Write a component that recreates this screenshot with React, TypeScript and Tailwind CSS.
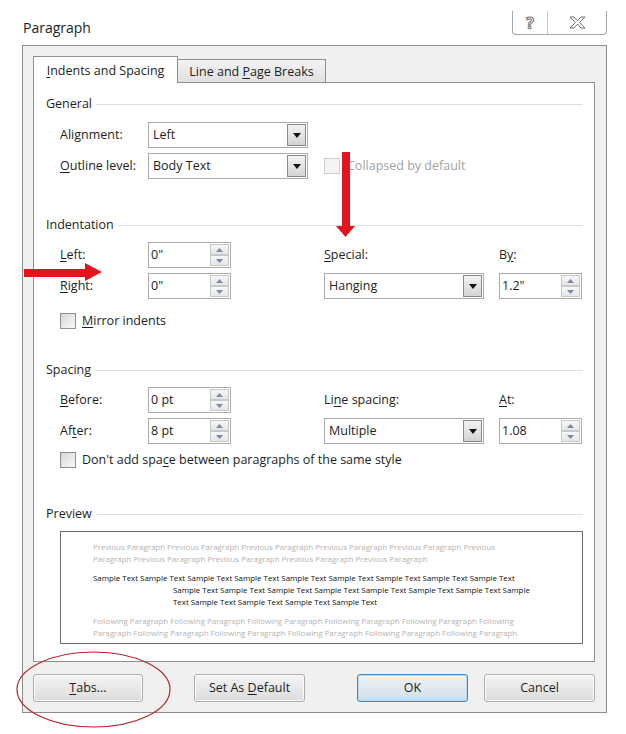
import React from "react";

const font = "font-['Open_Sans','Noto_Sans',sans-serif]";

const U: React.FC<{ children: React.ReactNode }> = ({ children }) => (
  <span className="underline decoration-1 underline-offset-2">{children}</span>
);

const SectionHeader: React.FC<{ title: string }> = ({ title }) => (
  <div className="flex h-4 items-center gap-[4px]">
    <span className="text-[12.5px] leading-4 text-[#1e1e1e]">{title}</span>
    <div className="h-px flex-1 bg-[#dfdfdf]" />
  </div>
);

const DropButton: React.FC = () => (
  <div className="m-px flex w-[19px] items-center justify-center border border-[#8a8a8a] bg-gradient-to-b from-[#f2f2f2] to-[#d4d4d4]">
    <svg width="8" height="5" viewBox="0 0 8 5">
      <path d="M0 0h8L4 5z" fill="#111" />
    </svg>
  </div>
);

const Select: React.FC<{ value: string }> = ({ value }) => (
  <div className="flex h-[26px] w-[160px] border border-[#abadb3] bg-white">
    <span className="flex flex-1 items-center pl-[4px] text-[12.5px] text-[#1e1e1e]">
      {value}
    </span>
    <DropButton />
  </div>
);

const SpinArrow: React.FC<{ up?: boolean }> = ({ up }) => (
  <div className="flex flex-1 items-center justify-center border border-[#c9c9c9] bg-gradient-to-b from-[#f7f7f7] to-[#e6e6e6]">
    <svg width="7" height="4" viewBox="0 0 7 4">
      <path d={up ? "M0 4h7L3.5 0z" : "M0 0h7L3.5 4z"} fill="#7a8aa6" />
    </svg>
  </div>
);

const Spin: React.FC<{ value: string }> = ({ value }) => (
  <div className="flex h-[26px] w-[83px] border border-[#abadb3] bg-white">
    <span className="flex flex-1 items-center pl-[2px] text-[12.5px] text-[#1e1e1e]">
      {value}
    </span>
    <div className="my-px mr-px flex w-[19px] flex-col">
      <SpinArrow up />
      <SpinArrow />
    </div>
  </div>
);

const Checkbox: React.FC<{ disabled?: boolean }> = ({ disabled }) =>
  disabled ? (
    <div className="h-[16px] w-[16px] border border-[#cfcfcf] bg-[#f4f4f4]" />
  ) : (
    <div className="h-[16px] w-[16px] border border-[#8e8f8f] bg-gradient-to-br from-[#d6d6d6] to-[#fafafa]" />
  );

const Label: React.FC<{ children: React.ReactNode }> = ({ children }) => (
  <span className="text-[12.5px] text-[#1e1e1e]">{children}</span>
);

const Button: React.FC<{ children: React.ReactNode; primary?: boolean }> = ({
  children,
  primary,
}) => (
  <div
    className={
      primary
        ? "flex h-[28px] w-[111px] items-center justify-center rounded-[3px] border border-[#3c8ccc] bg-gradient-to-b from-[#eef4f8] to-[#d2dde6] text-[12.5px] text-[#1e1e1e] shadow-[inset_0_0_0_1px_#b8d8ef]"
        : "flex h-[28px] w-[111px] items-center justify-center rounded-[3px] border border-[#acacac] bg-gradient-to-b from-[#f4f4f4] to-[#dcdcdc] text-[12.5px] text-[#1e1e1e] shadow-[inset_0_0_0_1px_#fbfbfb]"
    }
  >
    <span>{children}</span>
  </div>
);

const previewLines = {
  previous: [
    "Previous Paragraph Previous Paragraph Previous Paragraph Previous Paragraph Previous Paragraph Previous",
    "Paragraph Previous Paragraph Previous Paragraph Previous Paragraph Previous Paragraph",
  ],
  sample: [
    "Sample Text Sample Text Sample Text Sample Text Sample Text Sample Text Sample Text Sample Text Sample Text",
    "Sample Text Sample Text Sample Text Sample Text Sample Text Sample Text Sample Text Sample",
    "Text Sample Text Sample Text Sample Text Sample Text",
  ],
  following: [
    "Following Paragraph Following Paragraph Following Paragraph Following Paragraph Following Paragraph Following",
    "Paragraph Following Paragraph Following Paragraph Following Paragraph Following Paragraph Following Paragraph",
    "Following Paragraph Following Paragraph Following Paragraph Following Paragraph Following Paragraph",
  ],
};

const Preview: React.FC = () => (
  <div className="h-[113px] w-[523px] overflow-hidden border border-[#6d6d6d] bg-white pl-[32px] pt-[9px] text-[7.9px] leading-[12px]">
    {previewLines.previous.map((l) => (
      <div key={l} className="whitespace-nowrap text-[#b4b4b4]">
        {l}
      </div>
    ))}
    <div className="mt-[7px]">
      {previewLines.sample.map((l, i) => (
        <div
          key={l}
          className={`whitespace-nowrap text-[#111] ${i > 0 ? "pl-[80px]" : ""}`}
        >
          {l}
        </div>
      ))}
    </div>
    <div className="mt-[7px]">
      {previewLines.following.map((l) => (
        <div key={l} className="whitespace-nowrap text-[#b4b4b4]">
          {l}
        </div>
      ))}
    </div>
  </div>
);

const Row: React.FC<{ children: React.ReactNode; className?: string }> = ({
  children,
  className,
}) => (
  <div
    className={`grid h-[26px] grid-cols-[88px_176px_175px_84px] items-center pl-[14px] ${className ?? ""}`}
  >
    {children}
  </div>
);

const Annotations: React.FC = () => (
  <svg
    className="pointer-events-none absolute left-0 top-0"
    width="626"
    height="734"
    viewBox="0 0 626 734"
  >
    {/* down arrow */}
    <rect x="342" y="152" width="8" height="75" fill="#e3141c" />
    <path d="M336 226h19l-9.5 11z" fill="#e3141c" />
    {/* right arrow */}
    <rect x="24" y="269" width="62" height="8" fill="#e3141c" />
    <path d="M85 263v18l17-9z" fill="#e3141c" />
    {/* ellipse around Tabs */}
    <ellipse
      cx="93.5"
      cy="689.5"
      rx="76.5"
      ry="37.5"
      fill="none"
      stroke="#b8232a"
      strokeWidth="1.2"
    />
  </svg>
);

export default function App() {
  return (
    <div className={`relative h-[734px] w-[626px] overflow-hidden bg-white ${font}`}>
      {/* title bar */}
      <div className="flex h-[45px] items-start">
        <span className="ml-[23px] mt-[19px] text-[14px] leading-[18px] text-[#1e1e1e]">
          Paragraph
        </span>
        <div className="ml-auto mr-[19px] mt-[11px] flex h-[24px] w-[95px] rounded-b-[4px] border border-t-0 border-[#a7a7a7] bg-white">
          <div className="flex w-[35px] items-center justify-center border-r border-[#c8c8c8] text-[16px] font-bold text-transparent [-webkit-text-stroke:1px_#6e6e6e]">
            ?
          </div>
          <div className="flex flex-1 items-center justify-center">
            <svg width="17" height="13" viewBox="0 0 17 13">
              <path
                d="M1 1h4l3.5 3.8L12 1h4l-5.4 5.5L16 12h-4l-3.5-3.8L5 12H1l5.4-5.5z"
                fill="#fff"
                stroke="#6e6e6e"
                strokeWidth="1"
              />
            </svg>
          </div>
        </div>
      </div>

      {/* dialog frame */}
      <div className="ml-[22px] w-[585px] border border-[#8d8d8d] bg-[#f0f0f0] pb-[10px] pl-[10px] pr-[11px] pt-[10px]">
        {/* tabs */}
        <div className="flex h-[26px] items-end">
          <div className="relative z-10 -mb-px flex h-[27px] w-[145px] items-center justify-center border border-b-0 border-[#8e8f8f] bg-white pt-[3px] text-[12.5px] text-[#1e1e1e]">
            <span>
              <U>I</U>ndents and Spacing
            </span>
          </div>
          <div className="flex h-[23px] w-[148px] items-center justify-center border border-b-0 border-l-0 border-[#8e8f8f] bg-gradient-to-b from-[#f3f3f3] to-[#e0e0e0] pt-[2px] text-[12.5px] text-[#1e1e1e]">
            <span>
              Line and <U>P</U>age Breaks
            </span>
          </div>
        </div>

        {/* panel */}
        <div className="h-[580px] w-[562px] border border-[#8e8f8f] bg-white pl-[12px] pr-[11px] pt-[13px]">
          <SectionHeader title="General" />
          <Row className="mt-[10px]">
            <Label>
              Ali<U>g</U>nment:
            </Label>
            <div className="col-span-2">
              <Select value="Left" />
            </div>
          </Row>
          <Row className="mt-[5px]">
            <Label>
              <U>O</U>utline level:
            </Label>
            <Select value="Body Text" />
            <div className="col-span-2 flex items-center gap-[7px]">
              <Checkbox disabled />
              <span className="text-[12.5px] text-[#a2a2a2]">Collapsed by default</span>
            </div>
          </Row>

          <div className="mt-[38px]">
            <SectionHeader title="Indentation" />
          </div>
          <Row className="mt-[9px]">
            <Label>
              <U>L</U>eft:
            </Label>
            <Spin value={'0"'} />
            <Label>
              <U>S</U>pecial:
            </Label>
            <Label>
              B<U>y</U>:
            </Label>
          </Row>
          <Row className="mt-[5px]">
            <Label>
              <U>R</U>ight:
            </Label>
            <Spin value={'0"'} />
            <Select value="Hanging" />
            <Spin value={'1.2"'} />
          </Row>
          <div className="mt-[14px] flex h-4 items-center gap-[6px] pl-[14px]">
            <Checkbox />
            <Label>
              <U>M</U>irror indents
            </Label>
          </div>

          <div className="mt-[33px]">
            <SectionHeader title="Spacing" />
          </div>
          <Row className="mt-[9px]">
            <Label>
              <U>B</U>efore:
            </Label>
            <Spin value="0 pt" />
            <Label>
              Li<U>n</U>e spacing:
            </Label>
            <Label>
              <U>A</U>t:
            </Label>
          </Row>
          <Row className="mt-[5px]">
            <Label>
              Af<U>t</U>er:
            </Label>
            <Spin value="8 pt" />
            <Select value="Multiple" />
            <Spin value="1.08" />
          </Row>
          <div className="mt-[8px] flex h-4 items-center gap-[6px] pl-[14px]">
            <Checkbox />
            <Label>
              Don't add spa<U>c</U>e between paragraphs of the same style
            </Label>
          </div>

          <div className="mt-[38px]">
            <SectionHeader title="Preview" />
          </div>
          <div className="mt-[9px] pl-[14px]">
            <Preview />
          </div>
        </div>

        {/* buttons */}
        <div className="mt-[12px] flex">
          <Button>
            <U>T</U>abs...
          </Button>
          <div className="ml-[51px]">
            <Button>
              Set As <U>D</U>efault
            </Button>
          </div>
          <div className="ml-[52px]">
            <Button primary>OK</Button>
          </div>
          <div className="ml-[16px]">
            <Button>Cancel</Button>
          </div>
        </div>
      </div>

      <Annotations />
    </div>
  );
}
